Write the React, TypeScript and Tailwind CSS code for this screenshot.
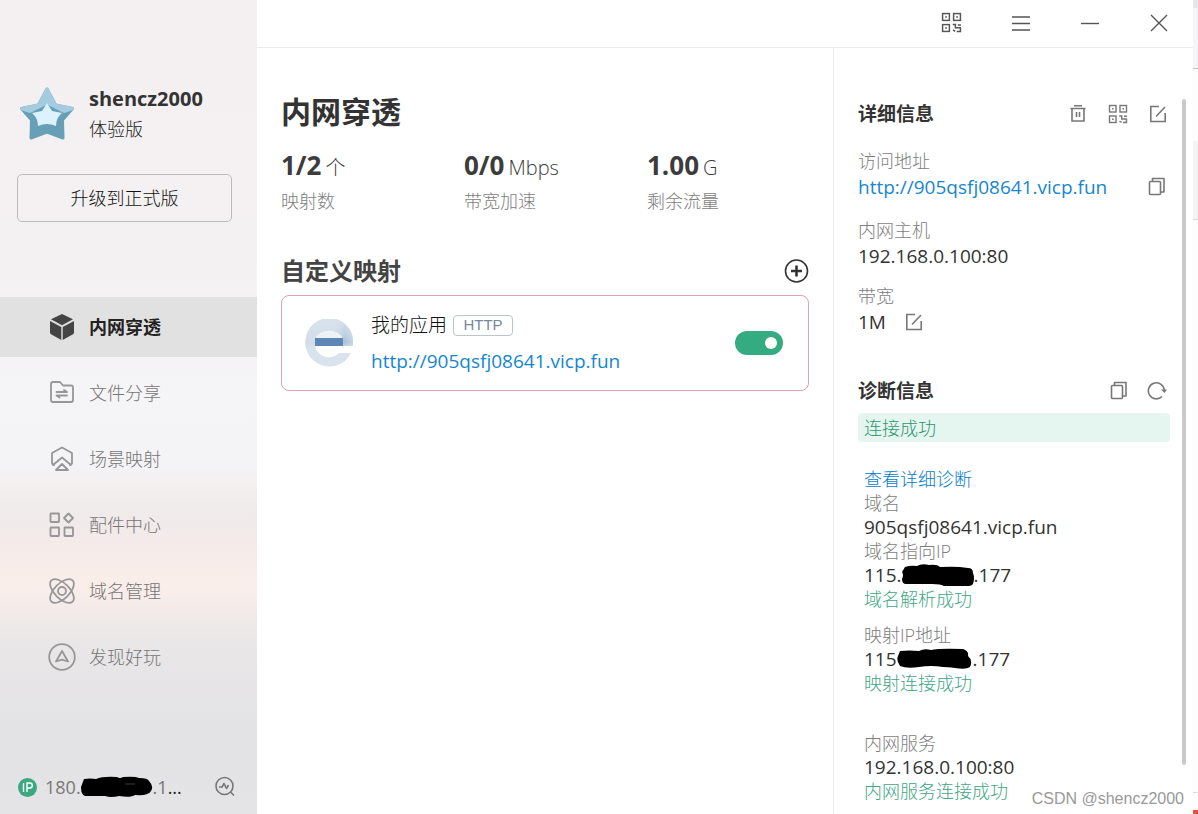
import type { ReactNode } from "react";

interface IconProps {
  className?: string;
}

function StarAvatar() {
  return (
    <svg className="h-14 w-14 shrink-0" viewBox="0 0 56 56" aria-hidden="true">
      <g strokeLinejoin="round" strokeWidth="3">
        <path
          d="M28 3 L36.500 19 L53.500 22.500 L43.500 34 L44 52 L28 46 L12 52 L12.500 34 L2.500 22.500 L19.500 19 Z"
          fill="#679fb6"
          stroke="#679fb6"
        />
        <path
          d="M28 3 L36.500 19 L53.500 22.500 L45 25.500 L28 17 L11 25.500 L2.500 22.500 L19.500 19 Z"
          fill="#a4cbdf"
          stroke="#a4cbdf"
        />
      </g>
      <path
        d="M28 17 L33 25 L43 27 Q37 32 37 40 Q28 36 19 40 Q19 32 13 27 L23 25 Z"
        fill="#dcf2fd"
      />
    </svg>
  );
}

function CubeIcon() {
  return (
    <svg className="h-7 w-7" viewBox="0 0 28 28" fill="#444444" aria-hidden="true">
      <path d="M14 1 L25 6.300 L14 12.300 L3 6.300 Z" />
      <path d="M2 8 L13.300 14 V27 L3 21.300 Q2 20.800 2 19.500 Z" />
      <path d="M26 8 L14.700 14 V27 L25 21.300 Q26 20.800 26 19.500 Z" />
    </svg>
  );
}

function LineIcon({ children }: { children: ReactNode }) {
  return (
    <svg
      className="h-7 w-7"
      viewBox="0 0 28 28"
      fill="none"
      stroke="#979797"
      strokeWidth="1.8"
      strokeLinejoin="round"
      strokeLinecap="round"
      aria-hidden="true"
    >
      {children}
    </svg>
  );
}

function FolderIcon() {
  return (
    <LineIcon>
      <path d="M3 5 Q3 3 5 3 H12 L15 6.500 H23 Q25 6.500 25 8.500 V21 Q25 23 23 23 H5 Q3 23 3 21 Z" />
      <path d="M8.500 13 H19 L16 11 M19 16.500 H8.500 L11.500 18.500" />
    </LineIcon>
  );
}

function SceneIcon() {
  return (
    <LineIcon>
      <path d="M6 20 L4 18.500 V8 L14 2.500 L24 8 V18.500 L22 20" />
      <path d="M5 20 L14 12.500 L23 20" />
      <path d="M8 25 L14 19 L20 25 Z" />
    </LineIcon>
  );
}

function PartsIcon() {
  return (
    <LineIcon>
      <rect x="2.500" y="2.500" width="8.500" height="8.500" rx="0.500" />
      <rect x="2.500" y="16.500" width="8.500" height="8.500" rx="0.500" />
      <rect x="16.500" y="16.500" width="8.500" height="8.500" rx="0.500" />
      <path d="M20.500 2.500 L25 7 L20.500 11.500 L16 7 Z" />
    </LineIcon>
  );
}

function AtomIcon() {
  return (
    <LineIcon>
      <ellipse cx="14" cy="14" rx="15" ry="7.500" transform="rotate(45 14 14)" />
      <ellipse cx="14" cy="14" rx="15" ry="7.500" transform="rotate(-45 14 14)" />
      <circle cx="14" cy="14" r="4" />
    </LineIcon>
  );
}

function CompassIcon() {
  return (
    <LineIcon>
      <circle cx="14" cy="14" r="12.800" />
      <path d="M14 8 L20 18.500 L14 16.700 L8 18.500 Z" />
    </LineIcon>
  );
}

function QrIcon({ className }: IconProps) {
  return (
    <svg className={className} viewBox="0 0 20 20" fill="none" stroke="currentColor" strokeWidth="1.400" aria-hidden="true">
      <rect x="1.500" y="1.500" width="6.500" height="6.500" />
      <rect x="12" y="1.500" width="6.500" height="6.500" />
      <rect x="1.500" y="12" width="6.500" height="6.500" />
      <path d="M4 4.750 h1.600 M14.500 4.750 h1.600 M4 15.250 h1.600" />
      <path d="M11.200 12 h2.500 v3 h5.300 M16 12.300 h3 M11.500 17 l2 1.500 M15 18.500 h3.500 v-3.500" />
    </svg>
  );
}

function EditIcon() {
  return (
    <svg className="h-5 w-5" viewBox="0 0 20 20" fill="none" stroke="currentColor" strokeWidth="1.600" aria-hidden="true">
      <path d="M11 2.500 H2.800 V17.500 H17.200 V9" />
      <path d="M8 12.500 L17 3" />
    </svg>
  );
}

function CopyIcon() {
  return (
    <svg
      className="h-5 w-5"
      viewBox="0 0 20 20"
      fill="none"
      stroke="currentColor"
      strokeWidth="1.600"
      strokeLinejoin="round"
      aria-hidden="true"
    >
      <rect x="2.500" y="4.500" width="11" height="13" rx="1" />
      <path d="M5.500 4.500 V1.500 H17 V15 H13.500" />
    </svg>
  );
}

function TrashIcon() {
  return (
    <svg className="h-5 w-5" viewBox="0 0 20 20" fill="none" stroke="currentColor" strokeWidth="1.600" aria-hidden="true">
      <path d="M2.500 4.500 H17.500 M6 1.800 H14" />
      <path d="M4 4.500 V17 H16 V4.500 M8.500 8 V13 M11.500 8 V13" />
    </svg>
  );
}

function RefreshIcon() {
  return (
    <svg className="h-5 w-5" viewBox="0 0 20 20" fill="none" stroke="currentColor" strokeWidth="1.600" aria-hidden="true">
      <path d="M15 15.500 A8 8 0 1 1 17.300 9" />
      <path d="M14 8.500 H20 L17.500 12 Z" fill="currentColor" stroke="none" />
    </svg>
  );
}

function AppLogo() {
  return (
    <svg className="h-12 w-12 shrink-0" viewBox="0 0 48 48" aria-hidden="true">
      <defs>
        <linearGradient id="ring" x1="0" y1="0" x2="1" y2="0">
          <stop offset="0" stopColor="#d0dce8" />
          <stop offset="0.600" stopColor="#d3deea" />
          <stop offset="0.820" stopColor="#a9c0d8" />
          <stop offset="1" stopColor="#c6d5e4" />
        </linearGradient>
        <linearGradient id="fade" x1="0" y1="0" x2="0" y2="1">
          <stop offset="0" stopColor="#d9e3ed" />
          <stop offset="0.350" stopColor="#d9e3ed" stopOpacity="0.400" />
          <stop offset="0.500" stopColor="#d9e3ed" stopOpacity="0" />
          <stop offset="0.650" stopColor="#d9e3ed" />
        </linearGradient>
      </defs>
      <path d="M48 27 A24 24 0 1 0 45.500 34.500 H33.500 A14 14 0 0 1 10 27 Z" fill="url(#ring)" />
      <path d="M48 27 A24 24 0 1 0 45.500 34.500 H33.500 A14 14 0 0 1 10 27 Z" fill="url(#fade)" />
      <path d="M10.500 19 A14 10 0 0 1 37.500 19 Z" fill="#edf2f7" />
      <rect x="10" y="19" width="28" height="8" fill="#5d87b6" />
    </svg>
  );
}

// Pen strokes that cover the private part of an address
function Redaction({ variant }: { variant: "wide" | "flat" | "bumpy" }) {
  const shapes = {
    wide: "M3 3 Q9 1 15 2 Q20 -1 27 1 Q35 0 38 3 Q55 2 66 4 Q71 4 71 9 Q73 14 71 20 Q69 23 60 22 H42 Q39 20 30 20 H4 Q0 20 0 15 Q2 11 0 8 Z",
    flat: "M3 3 Q9 2 15 3 Q22 0 36 1 Q39 3 42 1 Q54 0 58 2 Q67 2 68 5 Q73 10 70 15 Q68 20 54 19 Q50 22 38 20 Q30 22 24 20 H4 Q0 19 0 11 Z",
    bumpy: "M3 3 Q12 2 22 3 Q27 0 34 2 Q42 0 66 1 Q72 3 71 8 Q76 12 73 19 Q69 22 58 20 Q50 19 46 19 Q34 17 22 19 Q10 21 3 18 Q-1 12 1 8 Z",
  };
  const width = variant === "bumpy" ? "w-[76px]" : "w-[72px]";
  return (
    <svg
      className={`inline-block h-[22px] ${width} shrink-0 align-middle`}
      viewBox={variant === "bumpy" ? "0 0 76 22" : "0 0 72 22"}
      role="img"
      aria-label="hidden"
    >
      <path d={shapes[variant]} fill="#000000" />
      {variant === "flat" && <path d="M44 8 H54" stroke="#555555" strokeWidth="0.700" />}
    </svg>
  );
}

const navItems = [
  { label: "内网穿透", icon: <CubeIcon />, active: true },
  { label: "文件分享", icon: <FolderIcon /> },
  { label: "场景映射", icon: <SceneIcon /> },
  { label: "配件中心", icon: <PartsIcon /> },
  { label: "域名管理", icon: <AtomIcon /> },
  { label: "发现好玩", icon: <CompassIcon /> },
];

function Sidebar() {
  return (
    <aside className="flex w-[257px] shrink-0 flex-col bg-[linear-gradient(to_bottom,#f4f0f1_0%,#f4f1f2_30%,#f5f4f6_48%,#f4f4f6_57%,#f3efef_60%,#f0eaea_64%,#f5ebe9_67%,#faeeea_72%,#f3ebe9_75%,#e9e7e8_79%,#e3e2e4_91%,#e4e4e6_100%)] pt-[84px]">
      <div className="flex items-center gap-3.5 pl-[19px]">
        <StarAvatar />
        <div>
          <p className="text-xl leading-[30px] font-bold text-[#333]">shencz2000</p>
          <p className="text-lg leading-[30px] font-light text-[#222]">体验版</p>
        </div>
      </div>
      <button
        type="button"
        className="mt-[30px] mr-[25px] ml-[17px] h-12 rounded-[5px] border border-[#bcbaba] text-lg font-light text-[#111]"
      >
        升级到正式版
      </button>
      <nav className="mt-[75px] flex flex-col gap-1.5">
        {navItems.map((item) => (
          <a
            key={item.label}
            href="#"
            className={`flex h-[60px] items-center gap-[13px] pl-12 text-lg ${
              item.active ? "bg-[#e1e1e1] font-bold text-[#222]" : "font-light text-[#777575]"
            }`}
          >
            {item.icon}
            {item.label}
          </a>
        ))}
      </nav>
      <div className="mt-auto flex h-[54px] items-center pr-[21px] pl-[18px]">
        <svg className="h-[19px] w-[19px]" viewBox="0 0 19 19" aria-hidden="true">
          <circle cx="9.500" cy="9.500" r="9.500" fill="#3aa981" />
          <path
            d="M5.500 5 V14 M9 14 V5 H11.800 A2.500 2.500 0 0 1 11.800 10 H9"
            fill="none"
            stroke="#ffffff"
            strokeWidth="1.400"
          />
        </svg>
        <p className="ml-2 flex items-center text-lg whitespace-nowrap text-[#777]">
          180.
          <Redaction variant="flat" />
          .1<span className="text-[#222]">...</span>
        </p>
        <button type="button" aria-label="网络诊断" className="ml-auto">
          <svg
            className="h-[22px] w-[22px]"
            viewBox="0 0 22 22"
            fill="none"
            stroke="#777777"
            strokeWidth="1.600"
            strokeLinejoin="round"
            aria-hidden="true"
          >
            <circle cx="10.500" cy="10" r="8.500" />
            <path d="M5 11 L8 11 L10 7.500 L12.500 12.500 L14.500 9 M16.500 16 L20 19.500" />
          </svg>
        </button>
      </div>
    </aside>
  );
}

function TitleBar() {
  const button = "flex h-[47px] w-[69px] items-center justify-center pb-0.5";
  return (
    <header className="flex justify-end border-b border-[#ececec] text-[#555]">
      <button type="button" aria-label="二维码" className={button}>
        <QrIcon className="h-[21px] w-[21px]" />
      </button>
      <button type="button" aria-label="菜单" className={button}>
        <svg className="h-5 w-5" viewBox="0 0 20 20" stroke="currentColor" strokeWidth="1.400" aria-hidden="true">
          <path d="M1 4 H19 M1 10.500 H19 M1 17 H19" />
        </svg>
      </button>
      <button type="button" aria-label="最小化" className={button}>
        <svg className="h-5 w-5" viewBox="0 0 20 20" stroke="currentColor" strokeWidth="1.400" aria-hidden="true">
          <path d="M1 10.500 H19" />
        </svg>
      </button>
      <button type="button" aria-label="关闭" className={button}>
        <svg className="h-5 w-5" viewBox="0 0 20 20" stroke="currentColor" strokeWidth="1.400" aria-hidden="true">
          <path d="M2 2 L18 18 M18 2 L2 18" />
        </svg>
      </button>
    </header>
  );
}

const stats = [
  { value: "1/2", unit: "个", label: "映射数" },
  { value: "0/0", unit: "Mbps", label: "带宽加速" },
  { value: "1.00", unit: "G", label: "剩余流量" },
];

function MappingCard() {
  return (
    <div className="mt-2 flex h-24 items-center rounded-lg border border-[#e0a3b3] pr-[25px] pl-[23px]">
      <AppLogo />
      <div className="ml-[18px]">
        <div className="flex h-9 items-center gap-1.5">
          <span id="app-name" className="text-[19px] font-light text-[#111]">
            我的应用
          </span>
          <span className="flex h-[21px] w-[60px] items-center justify-center rounded border border-[#b9c6ce] font-['Liberation_Sans',sans-serif] text-[15px] text-[#758a9a]">
            HTTP
          </span>
        </div>
        <a href="#" className="block text-[19px] leading-9 text-[#1686d0]">
          http://905qsfj08641.vicp.fun
        </a>
      </div>
      <input
        type="checkbox"
        role="switch"
        defaultChecked
        aria-labelledby="app-name"
        className="ml-auto flex h-6 w-12 appearance-none items-center rounded-full bg-[#b5b5b5] px-1.5 before:h-3 before:w-3 before:rounded-full before:bg-white checked:justify-end checked:bg-[#35ab82]"
      />
    </div>
  );
}

function Overview() {
  return (
    <main className="min-w-0 flex-1 px-6 pt-11">
      <h1 className="text-3xl leading-10 font-bold text-[#333]">内网穿透</h1>
      <div className="mt-[15px] grid grid-cols-3 gap-[21px]">
        {stats.map((stat) => (
          <div key={stat.label}>
            <p className="flex h-9 items-baseline gap-1 whitespace-nowrap text-[#3c3c3c]">
              <span className="text-[26px] leading-9 font-bold">{stat.value}</span>
              <span className="text-xl leading-6 font-light">{stat.unit}</span>
            </p>
            <p className="mt-1.5 text-lg leading-6 font-light text-[#7e7e7e]">{stat.label}</p>
          </div>
        ))}
      </div>
      <div className="mt-[42px] flex h-8 items-center justify-between">
        <h2 className="text-2xl font-bold text-[#444]">自定义映射</h2>
        <button type="button" aria-label="添加映射">
          <svg className="h-[25px] w-[25px]" viewBox="0 0 25 25" fill="none" stroke="#333333" aria-hidden="true">
            <circle cx="12.500" cy="12" r="11" strokeWidth="1.600" />
            <path d="M12.500 6.500 V17.500 M7 12 H18" strokeWidth="2.600" />
          </svg>
        </button>
      </div>
      <MappingCard />
    </main>
  );
}

const diagnosis = [
  {
    label: "域名指向IP",
    value: (
      <>
        115.
        <Redaction variant="wide" />
        .177
      </>
    ),
    result: "域名解析成功",
    gap: "",
  },
  {
    label: "映射IP地址",
    value: (
      <>
        115
        <Redaction variant="bumpy" />
        .177
      </>
    ),
    result: "映射连接成功",
    gap: "mt-3",
  },
  { label: "内网服务", value: "192.168.0.100:80", result: "内网服务连接成功", gap: "mt-9" },
];

function DetailPanel() {
  const label = "text-lg leading-[26px] font-light text-[#7e7e7e]";
  const value = "flex items-center text-[19px] leading-[26px] text-[#333]";
  return (
    <section className="flex w-[360px] shrink-0 border-l border-[#ececec] pt-[51px]">
      <div className="flex-1 pt-px pr-3 pb-[11px] pl-6">
        <div className="flex h-7 items-center text-[#777]">
          <h2 className="mr-auto pt-px text-[19px] font-bold text-[#333]">详细信息</h2>
          <div className="flex gap-5 pr-0.5">
            <button type="button" aria-label="删除">
              <TrashIcon />
            </button>
            <button type="button" aria-label="二维码">
              <QrIcon className="h-5 w-5" />
            </button>
            <button type="button" aria-label="编辑">
              <EditIcon />
            </button>
          </div>
        </div>

        <dl className="mt-5">
          <dt className={label}>访问地址</dt>
          <dd className={`${value} justify-between pr-[3px]`}>
            <a href="#" className="text-[#1686d0]">
              http://905qsfj08641.vicp.fun
            </a>
            <button type="button" aria-label="复制地址" className="text-[#777]">
              <CopyIcon />
            </button>
          </dd>
          <dt className={`${label} mt-[17px]`}>内网主机</dt>
          <dd className={value}>192.168.0.100:80</dd>
          <dt className={`${label} mt-3.5`}>带宽</dt>
          <dd className={value}>
            1M
            <button type="button" aria-label="编辑带宽" className="ml-[18px] text-[#777]">
              <EditIcon />
            </button>
          </dd>
        </dl>

        <div className="mt-[42px] flex h-7 items-center text-[#777]">
          <h2 className="mr-auto pt-px text-[19px] font-bold text-[#333]">诊断信息</h2>
          <div className="flex gap-[18px] pr-[3px]">
            <button type="button" aria-label="复制诊断">
              <CopyIcon />
            </button>
            <button type="button" aria-label="刷新">
              <RefreshIcon />
            </button>
          </div>
        </div>
        <p className="mt-2 rounded bg-[#e5f6f0] px-1.5 pt-px text-lg leading-7 font-light text-[#2f9670]">连接成功</p>

        <div className="mt-[25px] pl-1.5 text-lg leading-6 font-light">
          <a href="#" className="block text-[#077ccb]">
            查看详细诊断
          </a>
          <dl>
            <dt className="text-[#7e7e7e]">域名</dt>
            <dd className="text-[19px] leading-6 font-normal text-[#333]">905qsfj08641.vicp.fun</dd>
            {diagnosis.map((item) => (
              <div key={item.label} className={item.gap}>
                <dt className="text-[#7e7e7e]">{item.label}</dt>
                <dd className="flex h-6 items-center text-[19px] font-normal text-[#333]">{item.value}</dd>
                <dd className="text-[#42a685]">{item.result}</dd>
              </div>
            ))}
          </dl>
        </div>
      </div>
      <div className="mr-[7px] mb-[49px] w-1 rounded-full bg-[#c9c9c9]" />
    </section>
  );
}

// Sliver of the window that sits behind this one
function BackgroundEdge() {
  return (
    <div className="flex w-[5px] shrink-0 flex-col bg-[#fcfcfc]" aria-hidden="true">
      <div className="h-2 bg-[#e6e6ea]" />
      <div className="h-[60px] bg-[#f5f5f8]" />
      <div className="h-[73px] border-t border-[#c4c4c4]" />
      <div className="h-[79px] border-b border-[#dcdcdc] bg-[#f4f4f4]" />
      <div className="mt-auto h-[18px] border-t border-[#dcdcdc]" />
      <div className="h-1 bg-[#e0533a]" />
    </div>
  );
}

export default function App() {
  return (
    <div className="relative flex min-h-screen bg-white font-['Open_Sans','Noto_Sans_CJK_SC',sans-serif]">
      <Sidebar />
      <div className="flex min-w-0 flex-1 flex-col">
        <TitleBar />
        <div className="flex flex-1">
          <Overview />
          <DetailPanel />
        </div>
      </div>
      <BackgroundEdge />
      <p className="absolute right-3.5 bottom-[3px] font-['Liberation_Sans',sans-serif] text-base text-[#999]">
        CSDN @shencz2000
      </p>
    </div>
  );
}
